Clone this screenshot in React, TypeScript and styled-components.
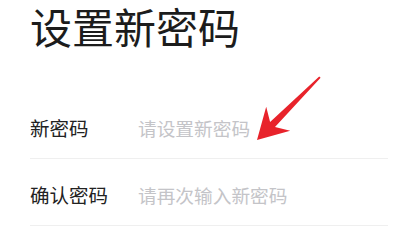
import React from 'react'
import styled, { createGlobalStyle } from 'styled-components'

const GlobalStyle = createGlobalStyle`
  html, body {
    margin: 0;
    padding: 0;
    background: #ffffff;
  }
  body {
    font-family: "Noto Sans CJK SC", "Noto Sans", sans-serif;
  }
`

const fields = [
  { label: '新密码', placeholder: '请设置新密码' },
  { label: '确认密码', placeholder: '请再次输入新密码' },
]

export default function App() {
  return (
    <>
      <GlobalStyle />
      <Page>
        <Title>设置新密码</Title>
        <Form>
          {fields.map(f => (
            <Row key={f.label}>
              <Label>{f.label}</Label>
              <Input type="password" placeholder={f.placeholder} />
            </Row>
          ))}
        </Form>
        <Arrow viewBox="0 0 406 245" aria-hidden="true">
          <polygon
            points="257,140 266.2,106.8 270.1,122 319.2,76.4 320.6,77.8 275,126.9 290.2,130.8"
            fill="#e8232b"
          />
        </Arrow>
      </Page>
    </>
  )
}

const Page = styled.div`
  position: relative;
  display: flex;
  flex-direction: column;
  width: 406px;
  height: 245px;
  padding: 0 18px 0 30px;
  box-sizing: border-box;
  overflow: hidden;
`

const Title = styled.h1`
  margin: -5px 0 0;
  font-size: 42px;
  line-height: 61px;
  font-weight: 400;
  color: #1c1c1c;
`

const Form = styled.div`
  margin-top: 36px;
  display: flex;
  flex-direction: column;
`

const Row = styled.div`
  height: 67px;
  box-sizing: border-box;
  padding-top: 5px;
  display: flex;
  align-items: center;
  border-bottom: 1px solid #efefef;
`

const Label = styled.div`
  width: 108px;
  flex-shrink: 0;
  font-size: 19.5px;
  color: #222222;
`

const Input = styled.input`
  flex: 1;
  min-width: 0;
  border: none;
  outline: none;
  padding: 0;
  background: transparent;
  font-family: inherit;
  font-size: 18.7px;
  color: #222222;

  &::placeholder {
    color: #c4c4c8;
  }
`

const Arrow = styled.svg`
  position: absolute;
  left: 0;
  top: 0;
  width: 406px;
  height: 245px;
  pointer-events: none;
`
